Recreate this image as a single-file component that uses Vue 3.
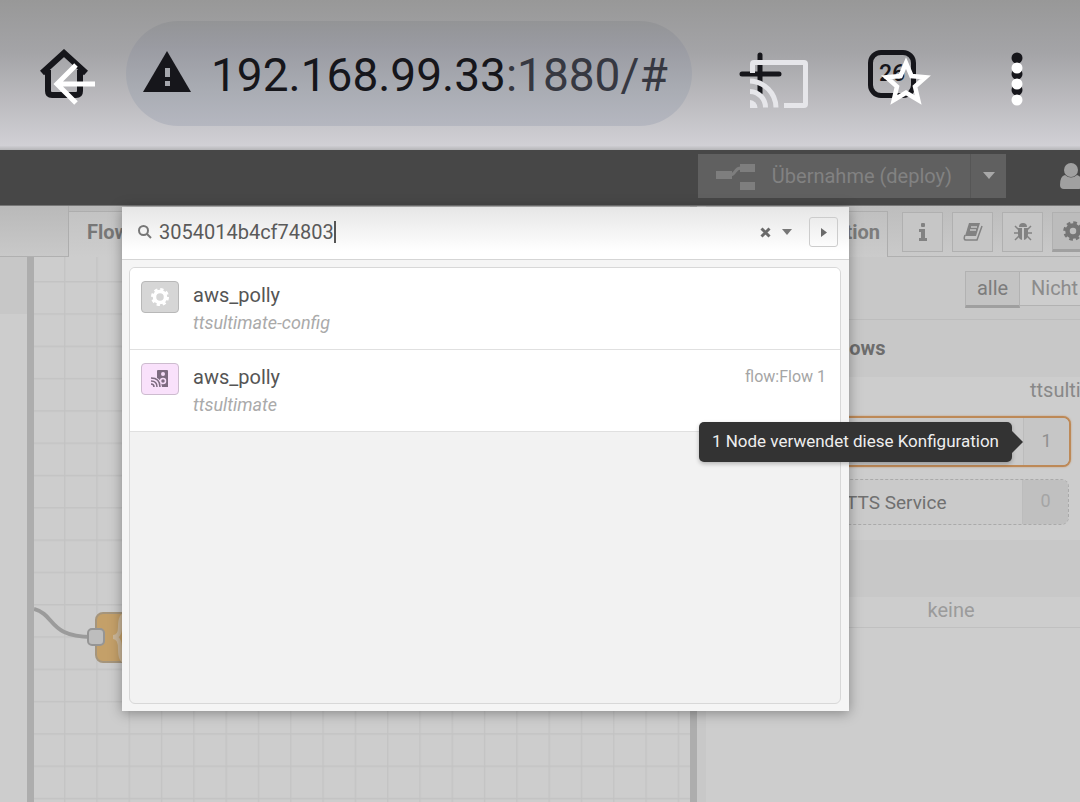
<template>
  <div class="screen">

    <header class="browser-bar">
      <button class="icon-btn home" aria-label="Startseite">
        <svg width="48" height="50" viewBox="0 0 48 50">
          <path d="M2 24 L24 4 L46 24" fill="none" stroke="#16161b" stroke-width="6" />
          <path d="M8 21 V42 Q8 46 12 46 H36 Q40 46 40 42 V21" fill="none" stroke="#16161b" stroke-width="6" />
        </svg>
      </button>
      <button class="address">
        <svg width="48" height="42" viewBox="0 0 48 42">
          <path d="M24 0 L48 41 H0 Z" fill="#16161b" />
          <rect x="22" y="17" width="5" height="9" fill="#a5a7ad" />
          <rect x="22" y="30" width="5" height="5" fill="#a5a7ad" />
        </svg>
        <span class="url">192.168.99.33<span class="port">:1880/#</span></span>
      </button>
      <button class="icon-btn new-tab" aria-label="Neuer Tab">
        <svg width="43" height="44" viewBox="0 0 43 44">
          <path d="M3 22 H40 M21 3 V41" stroke="#16161b" stroke-width="5" stroke-linecap="round" />
        </svg>
      </button>
      <button class="icon-btn tab-count">26</button>
      <button class="icon-btn" aria-label="Menü">
        <svg width="12" height="44" viewBox="0 0 12 44">
          <circle v-for="y in [6, 22, 38]" :key="y" cx="6" :cy="y" r="5.5" fill="#16161b" />
        </svg>
      </button>
    </header>

    <div class="viewer-bar">
      <button class="icon-btn back" aria-label="Zurück">
        <svg width="42" height="42" viewBox="0 0 42 42">
          <path d="M42 21 H4 M23 2 L4 21 L23 40" fill="none" stroke="#fff" stroke-width="5" />
        </svg>
      </button>
      <button class="icon-btn cast" aria-label="Streamen">
        <svg width="58" height="48" viewBox="0 0 58 48" fill="none" stroke="#e6e6ea" stroke-width="5">
          <path d="M2.5 13 V4 Q2.5 2.5 4 2.5 H54 Q55.5 2.5 55.5 4 V44 Q55.5 45.5 54 45.5 H34" />
          <path d="M0 21 A27 27 0 0 1 26 47.5" />
          <path d="M0 31.5 A16 16 0 0 1 15.5 47.5" />
          <path d="M0 40 A8 8 0 0 1 7.5 48 H0 Z" fill="#e6e6ea" stroke="none" />
        </svg>
      </button>
      <button class="icon-btn star" aria-label="Favorit">
        <svg width="52" height="50" viewBox="0 0 52 50">
          <path
            d="M26 6 L31.5 19 L45.5 20.2 L35 29.5 L38.2 43 L26 35.7 L13.8 43 L17 29.5 L6.5 20.2 L20.5 19 Z"
            fill="none" stroke="#fff" stroke-width="4.5"
          />
        </svg>
      </button>
      <button class="icon-btn" aria-label="Mehr">
        <svg width="12" height="44" viewBox="0 0 12 44">
          <circle v-for="y in [6, 22, 38]" :key="y" cx="6" :cy="y" r="5.5" fill="#fff" />
        </svg>
      </button>
    </div>

    <div class="editor-header">
      <button class="deploy">
        <svg width="40" height="28" viewBox="0 0 40 28" fill="#7e7e7e">
          <rect x="0" y="9" width="16" height="8" />
          <rect x="24" y="2" width="15" height="8" />
          <rect x="24" y="20" width="15" height="8" />
          <path d="M14 13 C20 13 18 6 25 6" fill="none" stroke="#7e7e7e" stroke-width="3" />
        </svg>
        Übernahme (deploy)
      </button>
      <button class="deploy-options" aria-label="Optionen">
        <svg width="14" height="8" viewBox="0 0 14 8"><path d="M1 0 H13 L7 7 Z" fill="#a8a8a8" /></svg>
      </button>
      <button class="icon-btn user" aria-label="Benutzer">
        <svg width="22" height="26" viewBox="0 0 22 26" fill="#a0a0a0">
          <circle cx="11" cy="7" r="7" />
          <path d="M0 22 Q0 13 5 12 Q11 17 17 12 Q22 13 22 22 Q22 26 18 26 H4 Q0 26 0 22 Z" />
        </svg>
      </button>
    </div>

    <main class="editor">
      <section class="left">
        <div class="flow-tabs">
          <div class="tab-space"></div>
          <button class="flow-tab">Flow 1</button>
        </div>
        <div class="canvas-row">
          <div class="palette"></div>
          <div class="canvas">
            <svg width="100%" height="100%">
              <defs>
                <pattern id="grid" x="30" y="24" width="32.3" height="32.3" patternUnits="userSpaceOnUse">
                  <path d="M0 0.7 H33 M0.7 0 V33" stroke="#c3c3c3" stroke-width="1.3" />
                </pattern>
              </defs>
              <rect width="100%" height="100%" fill="url(#grid)" />
              <path d="M0 352 C22 358 14 380 58 380" fill="none" stroke="#9b9b9b" stroke-width="4" />
              <rect x="62" y="356" width="120" height="49" rx="7" fill="#c4a069" stroke="#a5957c" stroke-width="2" />
              <path d="M91 358 Q86 358 86 370 Q86 380 79 380 Q86 380 86 392 Q86 404 91 404" fill="none" stroke="#cbb79a" stroke-width="4" />
              <rect x="54" y="372" width="16" height="16" rx="4" fill="#bdbdbd" stroke="#959595" stroke-width="2" />
            </svg>
          </div>
        </div>
      </section>

      <aside class="sidebar">
        <div class="side-tabs">
          <button class="side-tab">Konfiguration</button>
          <div class="side-buttons">
            <button class="side-btn" aria-label="Information">
              <svg width="10" height="18" viewBox="0 0 10 18" fill="#828282">
                <rect x="3" y="0" width="4" height="4" rx="1" />
                <path d="M1 6 H7 V15 H9 V18 H1 V15 H3 V9 H1 Z" />
              </svg>
            </button>
            <button class="side-btn" aria-label="Hilfe">
              <svg width="20" height="18" viewBox="0 0 20 18">
                <path d="M6 0 H17 L13 13 H2 Z" fill="#828282" />
                <path d="M8 4 H14 M7 7 H13" stroke="#c6c6c6" stroke-width="1.3" />
                <path d="M2 12 Q0 17 3 17 H14 L19 3" fill="none" stroke="#828282" stroke-width="1.5" />
              </svg>
            </button>
            <button class="side-btn" aria-label="Debug">
              <svg width="18" height="18" viewBox="0 0 18 18" fill="#828282">
                <path d="M5 4 Q5 0 9 0 Q13 0 13 4 Z" />
                <path d="M4 5 H8 V17 Q4 16 4 11 Z M10 5 H14 V11 Q14 16 10 17 Z" />
                <path d="M1 3 L5 7 M17 3 L13 7 M0 10 H4 M18 10 H14 M1 17 L5 13 M17 17 L13 13" stroke="#828282" stroke-width="1.5" />
              </svg>
            </button>
            <button class="side-btn active" aria-label="Konfiguration">
              <svg width="20" height="20" viewBox="0 0 20 20">
                <circle cx="10" cy="10" r="5.5" fill="none" stroke="#757575" stroke-width="4.5" />
                <circle cx="10" cy="10" r="8" fill="none" stroke="#757575" stroke-width="3.5" stroke-dasharray="3.5 2.783" />
              </svg>
            </button>
          </div>
        </div>

        <div class="filter">
          <button class="filter-btn selected">alle</button>
          <button class="filter-btn">Nicht</button>
        </div>

        <h3 class="category">Flows</h3>
        <div class="config-list">
          <div class="config-type">ttsulti</div>
          <div class="config-node highlighted">
            <span class="node-label"></span>
            <span class="node-count">1</span>
          </div>
          <div class="config-node unused">
            <span class="node-label">TTS Service</span>
            <span class="node-count">0</span>
          </div>
        </div>
        <h3 class="category"></h3>
        <div class="none">keine</div>
      </aside>

      <div class="search-dialog">
        <div class="search-bar">
          <label for="search" aria-label="Suche">
            <svg width="14" height="14" viewBox="0 0 14 14">
              <circle cx="5.5" cy="5.5" r="4.5" fill="none" stroke="#777" stroke-width="2" />
              <path d="M9 9 L13 13" stroke="#777" stroke-width="2" />
            </svg>
          </label>
          <input id="search" v-model="query" type="text" />
          <span class="caret"></span>
          <button class="icon-btn clear" aria-label="Löschen" @click="query = ''">
            <svg width="11" height="11" viewBox="0 0 11 11"><path d="M1.5 1.5 L9.5 9.5 M9.5 1.5 L1.5 9.5" stroke="#6a6a6a" stroke-width="3" /></svg>
          </button>
          <button class="icon-btn history" aria-label="Verlauf">
            <svg width="10" height="6" viewBox="0 0 10 6"><path d="M0 0 H10 L5 6 Z" fill="#777" /></svg>
          </button>
          <button class="next" aria-label="Weiter">
            <svg width="6" height="9" viewBox="0 0 6 9"><path d="M0 0 L6 4.5 L0 9 Z" fill="#6a6a6a" /></svg>
          </button>
        </div>

        <ul class="results">
          <li v-for="result in results" :key="result.type" class="result">
            <span class="result-icon" :class="result.icon">
              <svg v-if="result.icon === 'config'" width="20" height="20" viewBox="0 0 20 20">
                <circle cx="10" cy="10" r="5.5" fill="none" stroke="#fff" stroke-width="3.5" />
                <circle cx="10" cy="10" r="7.5" fill="none" stroke="#fff" stroke-width="3" stroke-dasharray="3.2 2.69" />
              </svg>
              <svg v-else width="18" height="18" viewBox="0 0 18 18">
                <path d="M7 0 H16 Q17 0 17 1 V17 H11 Q10 9 6 8 V1 Q6 0 7 0 Z" fill="#7d6b80" />
                <circle cx="12" cy="4" r="2" fill="#f6dcf8" />
                <circle cx="12" cy="11" r="2.5" fill="none" stroke="#f6dcf8" stroke-width="1.5" />
                <path d="M0 8 Q9 8 9 17 M0 11 Q6 11 6 17 M0 14 Q3 14 3 17" fill="none" stroke="#7d6b80" stroke-width="1.5" />
              </svg>
            </span>
            <span class="result-text">
              <span class="result-name">{{ result.name }}</span>
              <em class="result-type">{{ result.type }}</em>
            </span>
            <span class="result-flow">{{ result.flow }}</span>
          </li>
        </ul>
      </div>

      <div class="tooltip" role="tooltip">1 Node verwendet diese Konfiguration</div>
    </main>

  </div>
</template>


<script setup>
import { ref } from 'vue';

const query = ref('3054014b4cf74803');

const results = [
  { name: 'aws_polly', type: 'ttsultimate-config', icon: 'config', flow: '' },
  { name: 'aws_polly', type: 'ttsultimate', icon: 'speaker', flow: 'flow:Flow 1' },
];
</script>


<style>
body {
  margin: 0;
  overflow: hidden;
}
</style>

<style scoped>
.screen {
  position: relative;
  display: flex;
  flex-direction: column;
  min-height: 100vh;
  overflow: hidden;
  background: #cdcdcd;
  font-family: Roboto, "Liberation Sans", sans-serif;
  font-size: 20px;
  color: #777;
}

.screen * {
  box-sizing: border-box;
}

button {
  padding: 0;
  border: 0;
  background: none;
  font-family: inherit;
  font-size: inherit;
  color: inherit;
}

svg {
  display: block;
  flex-shrink: 0;
}

.icon-btn {
  flex-shrink: 0;
}

/* browser */
.browser-bar {
  display: flex;
  align-items: center;
  height: 150px;
  padding: 0 57px 3px 40px;
  background: linear-gradient(#989898, #a4a4a7 35%, #d1d0d5 97%, #b5b5b8);
}

.address {
  flex: 1;
  display: flex;
  align-items: center;
  gap: 20px;
  min-width: 0;
  height: 105px;
  margin: 0 47px 0 38px;
  padding: 0 17px;
  border-radius: 53px;
  background: linear-gradient(#939496, #9a9ba2 25%, #a9acb3 65%, #b5b7c0);
}

.address svg {
  margin-bottom: 3px;
}

.url {
  padding-top: 3px;
  font-size: 46px;
  line-height: 54px;
  white-space: nowrap;
  color: #16161b;
}

.port {
  color: #363841;
}

.tab-count {
  width: 48px;
  height: 48px;
  margin: 0 95px 0 86px;
  border: 5px solid #16161b;
  border-radius: 13px;
  font-size: 23px;
  font-weight: 500;
  color: #16161b;
}

.viewer-bar {
  position: absolute;
  top: 58px;
  left: 0;
  right: 0;
  display: flex;
  align-items: center;
  height: 52px;
  padding: 0 57px 0 53px;
}

.cast {
  margin-left: auto;
}

.star {
  margin: 0 79px 4px 72px;
}

/* editor header */
.editor-header {
  display: flex;
  justify-content: flex-end;
  align-items: center;
  height: 56px;
  padding-bottom: 4px;
  background: #474747;
  border-bottom: 1px solid #777;
}

.deploy,
.deploy-options {
  display: flex;
  align-items: center;
  height: 44px;
  background: #606060;
  color: #828282;
}

.deploy {
  gap: 16px;
  padding: 0 18px;
}

.deploy-options {
  justify-content: center;
  width: 36px;
  border-left: 1px solid #565656;
}

.user {
  margin: 0 -2px 0 54px;
}

/* editor */
.editor {
  position: relative;
  flex: 1;
  display: flex;
}

.left {
  flex: 1;
  display: flex;
  flex-direction: column;
  min-width: 0;
  border-right: 7px solid #adadad;
}

.flow-tabs {
  display: flex;
  height: 51px;
  background: linear-gradient(#b9b9b9, #c9c9c9);
}

.tab-space {
  width: 69px;
  border-right: 1px solid #adadad;
  border-bottom: 1px solid #b0b0b0;
}

.flow-tab {
  flex: 1;
  margin-top: 5px;
  padding: 0 0 6px 18px;
  border-top: 1px solid #adadad;
  background: linear-gradient(#c3c3c3, #cdcdcd);
  text-align: left;
  font-weight: 700;
}

.canvas-row {
  flex: 1;
  display: flex;
}

.palette {
  width: 34px;
  border-right: 7px solid #adadad;
  background: linear-gradient(#c7c7c7 57px, #cdcdcd 57px);
}

.canvas {
  flex: 1;
  position: relative;
  background: #cdcdcd;
}

.canvas svg {
  position: absolute;
  inset: 0;
}

.sidebar {
  width: 383px;
  padding-left: 9px;
  overflow: hidden;
  background: linear-gradient(90deg, #c8c8c8 9px, #cdcdcd 9px);
}

.side-tabs {
  display: flex;
  height: 51px;
  background: linear-gradient(#bdbdbd, #cacaca);
}

.side-tab {
  flex-shrink: 0;
  width: 182px;
  margin-top: 5px;
  padding: 0 7px 6px 0;
  border: 1px solid #adadad;
  border-bottom: 0;
  background: linear-gradient(#c0c0c0, #cbcbcb);
  text-align: right;
  font-weight: 700;
  color: #7c7c7c;
}

.side-buttons {
  flex: 1;
  display: flex;
  gap: 9px;
  padding: 6px 0 4px 14px;
  border-bottom: 1px solid #b0b0b0;
}

.side-btn {
  flex-shrink: 0;
  display: flex;
  align-items: center;
  justify-content: center;
  width: 41px;
  border: 1px solid #b0b0b0;
  background: #c6c6c6;
}

.side-btn.active {
  border-bottom: 3px solid #a0a0a0;
  background: #bcbcbc;
}

.filter {
  display: flex;
  height: 63px;
  padding: 14px 0 0 258px;
  border-left: 1px solid #b5b5b5;
  border-bottom: 1px solid #bdbdbd;
  background: #c8c8c8;
}

.filter-btn {
  flex: 1;
  height: 35px;
  padding: 0 0 2px 11px;
  border: solid #b2b2b2;
  border-width: 1px 0;
  background: #cdcdcd;
  text-align: left;
  color: #8c8c8c;
}

.filter-btn.selected {
  flex: 0 0 55px;
  height: 37px;
  padding: 0 0 2px;
  border-width: 1px 1px 3px;
  border-bottom-color: #9f9f9f;
  background: #c3c3c3;
  text-align: center;
  color: #7c7c7c;
}

.category {
  height: 57px;
  margin: 0;
  padding-left: 126px;
  border-left: 1px solid #b5b5b5;
  background: #c8c8c8;
  font-size: 20px;
  font-weight: 700;
  line-height: 56px;
  color: #6d6d6d;
}

.config-list {
  height: 163px;
  padding-right: 9px;
  border-left: 1px solid #b5b5b5;
}

.config-type {
  height: 39px;
  padding-left: 323px;
  line-height: 26px;
  white-space: nowrap;
  color: #888;
}

.config-node {
  display: flex;
  border-radius: 8px;
  background: #cacaca;
}

.highlighted {
  height: 51px;
  border: 2px solid #bd8957;
  box-shadow: 0 0 2px #c79a70;
}

.unused {
  height: 46px;
  margin: 12px 2px 0 0;
  border: 1px dashed #aaa;
}

.node-label {
  flex: 1;
  padding-left: 138px;
  font-size: 19px;
  line-height: 46px;
  color: #707070;
}

.node-count {
  width: 46px;
  border-left: 1px solid #bcbcbc;
  border-radius: 0 6px 6px 0;
  background: #c6c6c6;
  text-align: center;
  font-size: 18px;
  line-height: 46px;
  color: #909090;
}

.unused .node-count {
  background: #c0c0c0;
  line-height: 42px;
  color: #a5a5a5;
}

.none {
  height: 31px;
  padding-left: 115px;
  border-left: 1px solid #b5b5b5;
  border-bottom: 1px solid #c0c0c0;
  text-align: center;
  line-height: 26px;
  color: #9b9b9b;
}

/* search */
.search-dialog {
  position: absolute;
  top: 1px;
  left: 122px;
  width: 727px;
  background: #f5f5f5;
  box-shadow: 0 2px 12px rgba(0, 0, 0, 0.35);
}

.search-bar {
  display: flex;
  align-items: center;
  height: 53px;
  padding: 0 11px 2px 16px;
  border-bottom: 1px solid #d5d5d5;
  background: linear-gradient(#e6e6e6, #fff 85%);
}

.search-bar input {
  field-sizing: content;
  margin-left: 7px;
  padding: 0;
  border: 0;
  outline: 0;
  background: none;
  font-family: inherit;
  font-size: 20px;
  line-height: 24px;
  color: #5a5a5a;
}

.caret {
  width: 2px;
  height: 22px;
  background: #555;
}

.clear {
  margin-left: auto;
}

.history {
  margin: 0 17px 0 11px;
}

.next {
  display: flex;
  align-items: center;
  justify-content: center;
  width: 29px;
  height: 30px;
  border: 1px solid #ccc;
  border-radius: 3px;
}

.results {
  height: 437px;
  margin: 7px 8px 7px 7px;
  padding: 0;
  border: 1px solid #d8d8d8;
  border-radius: 6px;
  overflow: hidden;
  background: #f2f2f2;
  list-style: none;
}

.result {
  display: flex;
  height: 82px;
  padding: 13px 14px 0 11px;
  border-bottom: 1px solid #e0e0e0;
  background: #fff;
}

.result-icon {
  display: flex;
  align-items: center;
  justify-content: center;
  width: 38px;
  height: 32px;
  border: 1px solid #b8b8b8;
  border-radius: 4px;
}

.config {
  background: #d6d6d6;
}

.speaker {
  border-color: #cdbccf;
  background: #f9e1fb;
}

.result-text {
  flex: 1;
  margin-left: 14px;
}

.result-name,
.result-type {
  display: block;
  line-height: 28px;
}

.result-name {
  color: #555;
}

.result-type {
  font-size: 18px;
  color: #aaa;
}

.result-flow {
  font-size: 16px;
  line-height: 28px;
  color: #a5a5a5;
}

.tooltip {
  position: absolute;
  top: 216px;
  right: 68px;
  height: 40px;
  padding: 0 13px;
  border-radius: 5px;
  background: #333;
  box-shadow: 0 2px 4px rgba(0, 0, 0, 0.25);
  font-size: 17px;
  line-height: 38px;
  white-space: nowrap;
  color: #eee;
}

.tooltip::after {
  content: "";
  position: absolute;
  top: 9px;
  left: 100%;
  border: 11px solid transparent;
  border-left-color: #333;
  border-right-width: 0;
}
</style>
